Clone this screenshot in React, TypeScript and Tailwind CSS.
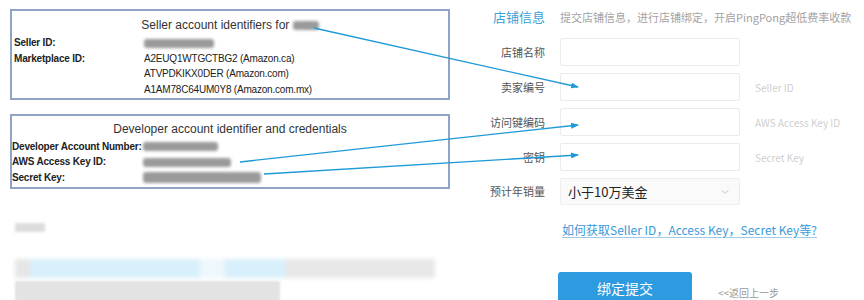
import React from 'react';
import { ChevronDown } from 'lucide-react';

const arial = "font-['Liberation_Sans',Arial,sans-serif]";
const cjk = "font-['Noto_Sans_CJK_SC',sans-serif]";

function Blur({ w, className = '' }: { w: number; className?: string }) {
  return (
    <span
      className={`inline-block h-[9px] rounded-[3px] bg-[#9a9a9a] blur-[1.5px] align-middle ${className}`}
      style={{ width: w }}
    />
  );
}

function Arrows() {
  const lines = [
    { x1: 314, y1: 28, x2: 578, y2: 87 },
    { x1: 240, y1: 162, x2: 578, y2: 125 },
    { x1: 264, y1: 174, x2: 578, y2: 155 },
  ];
  return (
    <svg className="absolute inset-0 pointer-events-none" width="864" height="300" viewBox="0 0 864 300">
      <defs>
        <marker id="head" markerWidth="8" markerHeight="6" refX="7" refY="3" orient="auto" markerUnits="userSpaceOnUse">
          <path d="M0 0 L8 3 L0 6 Z" fill="#1f9ad8" />
        </marker>
      </defs>
      {lines.map((l, i) => (
        <line key={i} {...l} stroke="#1f9ad8" strokeWidth="1.3" markerEnd="url(#head)" />
      ))}
    </svg>
  );
}

export default function App() {
  const fields = [
    { label: '店铺名称', hint: '' },
    { label: '卖家编号', hint: 'Seller ID' },
    { label: '访问键编码', hint: 'AWS Access Key ID' },
    { label: '密钥', hint: 'Secret Key' },
  ];

  return (
    <div className="relative w-[864px] h-[300px] overflow-hidden bg-white flex">
      {/* amazon screenshot */}
      <div className={`w-[460px] pl-[10px] pt-[9px] ${arial}`}>
        <div className="w-[440px] h-[91px] border-2 border-[#8fa3c4] bg-white pt-[7px] text-[10px] tracking-[-0.2px] text-[#222]">
          <div className="text-center text-[12px] tracking-normal leading-[15px] text-[#333]">
            Seller account identifiers for <Blur w={26} className="bg-[#8a8f96]" />
          </div>
          <div className="mt-[2px] grid grid-cols-[130px_1fr] pl-[2px] leading-[15.5px] whitespace-nowrap">
            <span className="font-bold">Seller ID:</span>
            <span><Blur w={70} /></span>
            <span className="font-bold">Marketplace ID:</span>
            <span>A2EUQ1WTGCTBG2 (Amazon.ca)</span>
            <span />
            <span>ATVPDKIKX0DER (Amazon.com)</span>
            <span />
            <span>A1AM78C64UM0Y8 (Amazon.com.mx)</span>
          </div>
        </div>

        <div className="mt-[14px] w-[440px] h-[75px] border-2 border-[#8fa3c4] bg-white pt-[6px] text-[10px] tracking-[-0.2px] text-[#222]">
          <div className="text-center text-[12px] tracking-normal leading-[15px] text-[#333]">
            Developer account identifier and credentials
          </div>
          <div className="mt-[1.5px] grid grid-cols-[131px_1fr] leading-[15.5px] font-bold whitespace-nowrap">
            <span>Developer Account Number:</span>
            <span><Blur w={75} /></span>
            <span>AWS Access Key ID:</span>
            <span><Blur w={88} /></span>
            <span>Secret Key:</span>
            <span><Blur w={118} className="h-[11px] bg-[#8c8c8c]" /></span>
          </div>
        </div>

        <div className="mt-[34px] ml-[5px] w-[30px] h-[9px] bg-[#dcdcdc] blur-[1.5px]" />
        <div className="mt-[27px] ml-[5px] flex h-[19px] w-[420px] blur-[2px]">
          <div className="w-[15px] bg-[#e6e6e6]" />
          <div className="w-[170px] bg-[#d8f0fb]" />
          <div className="w-[25px] bg-[#eef7fb]" />
          <div className="w-[60px] bg-[#d8f0fb]" />
          <div className="flex-1 bg-[#e8e8e8]" />
        </div>
        <div className="mt-[3px] ml-[5px] h-[20px] w-[265px] bg-[#e3e3e3] blur-[1px]" />
      </div>

      {/* form */}
      <div className={`flex-1 pt-[10px] ${cjk}`}>
        <div className="flex items-center leading-[14px]">
          <span className="w-[85px] text-right text-[13px] text-[#3b9fd8]">店铺信息</span>
          <span className="ml-[15px] text-[11px] text-[#a3a3a3] whitespace-nowrap">
            提交店铺信息，进行店铺绑定，开启PingPong超低费率收款
          </span>
        </div>

        <div className="mt-[14px] flex flex-col gap-[7px]">
          {fields.map((f) => (
            <div key={f.label} className="flex items-center h-[28px]">
              <span className="w-[85px] text-right text-[11px] text-[#555]">{f.label}</span>
              <div className="ml-[15px] w-[180px] h-full border border-[#ebebeb] rounded-[2px] bg-white" />
              <span className="ml-[15px] text-[10px] text-[#cfcfcf] whitespace-nowrap">{f.hint}</span>
            </div>
          ))}
          <div className="flex items-center h-[27px]">
            <span className="w-[85px] text-right text-[11px] text-[#555]">预计年销量</span>
            <div className="ml-[15px] w-[180px] h-full border border-[#eeeeee] rounded-[2px] bg-[#fafafa] flex items-center justify-between pl-[7px] pr-[8px]">
              <span className="text-[13px] text-[#222]">小于10万美金</span>
              <ChevronDown className="w-[12px] h-[12px] text-[#b0b0b0]" strokeWidth={1.5} />
            </div>
          </div>
        </div>

        <div className="mt-[15px] ml-[102px] leading-[16px]">
          <span className="text-[12px] text-[#3a9ad9] underline underline-offset-2 decoration-[#9fcbe9] whitespace-nowrap">
            如何获取Seller ID，Access Key，Secret Key等?
          </span>
        </div>

        <div className="mt-[34px] ml-[98px] flex items-end">
          <div className="w-[134px] h-[32px] rounded-t-[3px] bg-[#2c9be0] flex items-center justify-center text-[14px] text-white">
            绑定提交
          </div>
          <span className="ml-[26px] mb-[5px] text-[10px] leading-[12px] text-[#9a9a9a]">&lt;&lt;返回上一步</span>
        </div>
      </div>

      <Arrows />
    </div>
  );
}
